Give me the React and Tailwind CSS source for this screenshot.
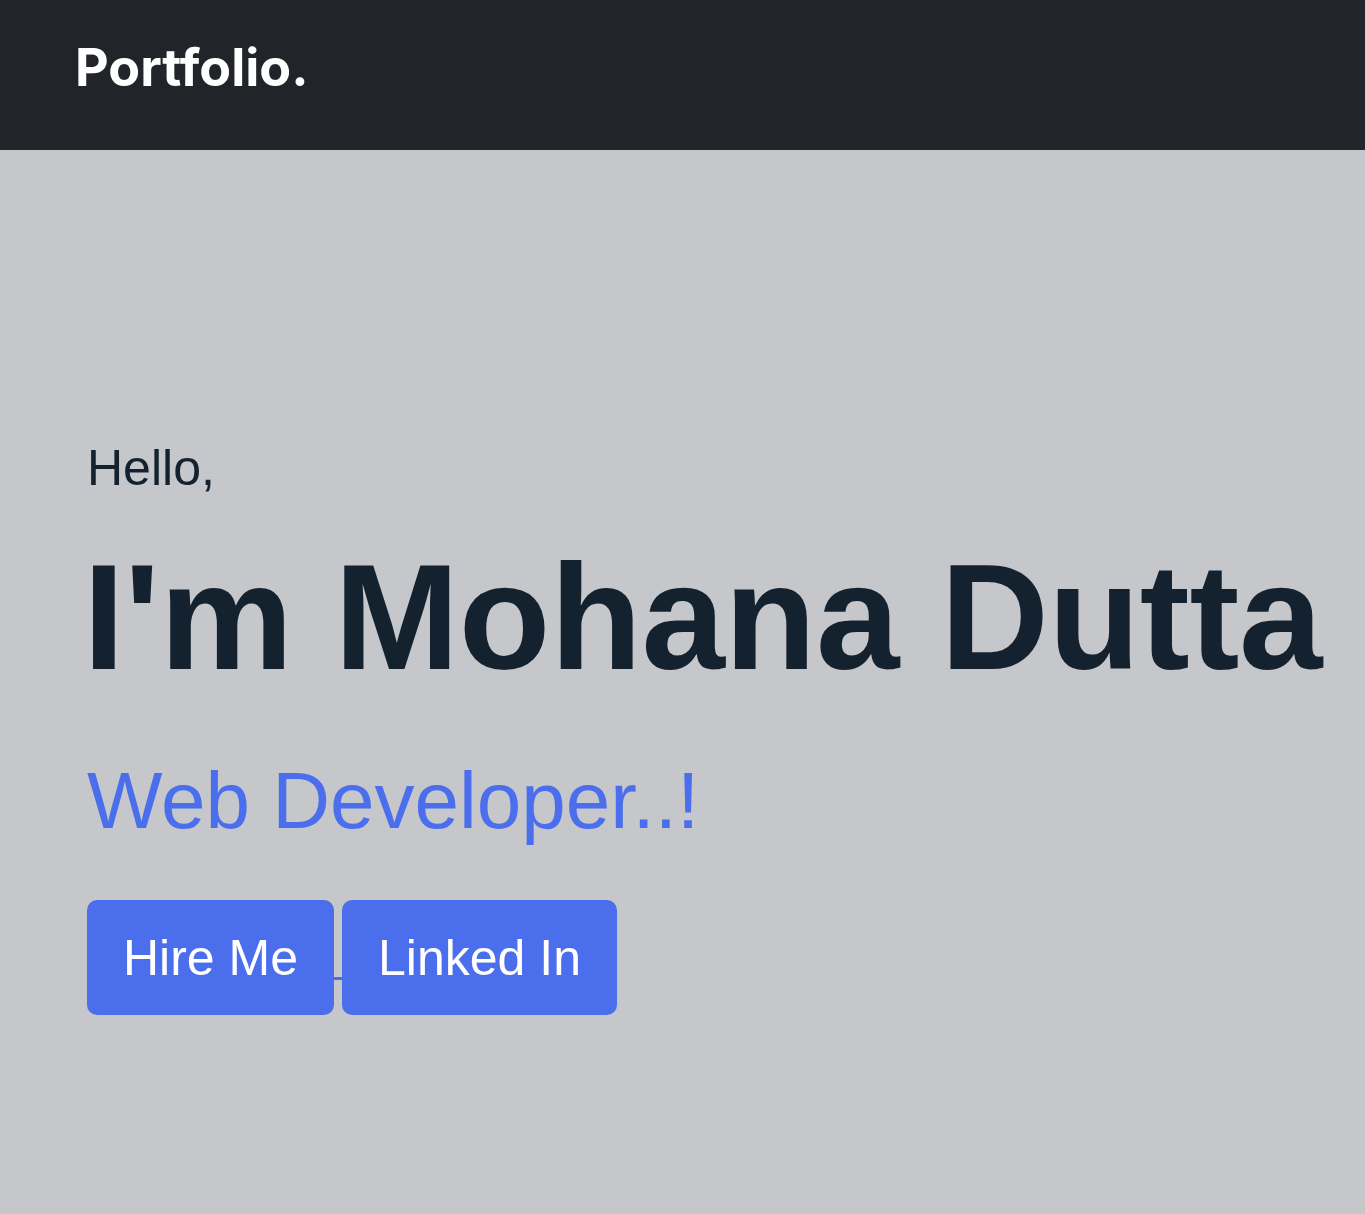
import React from 'react';

const sans = { fontFamily: '"Liberation Sans", Arial, sans-serif' };

const App = () => {
    return (
        <div className="min-h-[1214px] bg-[#c6c7cb]" style={sans}>
            <header className="h-[150px] bg-[#212529] flex items-center pl-[75px] pb-[14px]">
                <a href="#" className="text-white text-[52px] font-bold leading-none font-['Inter',sans-serif] [font-variant-ligatures:none]">
                    Portfolio.
                </a>
            </header>

            <main className="pl-[87px] pt-[293px]">
                <p className="text-[50px] leading-none text-[#14222f]">Hello,</p>
                <h1 className="mt-[49px] -ml-[4px] text-[150px] font-bold leading-none tracking-[-0.3px] text-[#14222f] whitespace-nowrap">
                    I'm Mohana Dutta
                </h1>
                <h2 className="mt-[69px] text-[80px] leading-none text-[#4b6fec]">Web Developer..!</h2>

                <div className="mt-[59px] flex items-start">
                    <button className="h-[115px] px-9 rounded-[10px] bg-[#4b6fec] text-white text-[50px] leading-none">
                        Hire Me
                    </button>
                    {/* underlined space between the two links */}
                    <span className="w-2 h-[3px] mt-[77px] bg-[#4b6fec]" />
                    <button className="h-[115px] px-9 rounded-[10px] bg-[#4b6fec] text-white text-[50px] leading-none">
                        Linked In
                    </button>
                </div>
            </main>
        </div>
    );
};

export default App;
